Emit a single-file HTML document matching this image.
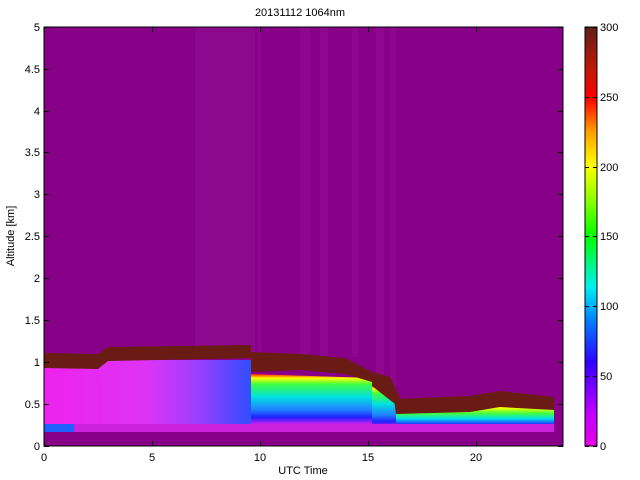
<!DOCTYPE html>
<html><head><meta charset="utf-8"><style>
html,body{margin:0;padding:0;background:#fff;width:640px;height:480px;overflow:hidden}
svg{display:block;font-family:"Liberation Sans",sans-serif;font-size:11px}
</style></head><body>
<svg width="640" height="480" viewBox="0 0 640 480">
<defs>
<linearGradient id="cb" x1="0" y1="1" x2="0" y2="0">
<stop offset="0" stop-color="#e600e6"/><stop offset="0.08" stop-color="#c000ff"/>
<stop offset="0.2" stop-color="#3000ff"/><stop offset="0.3" stop-color="#0080ff"/>
<stop offset="0.38" stop-color="#00f0f0"/><stop offset="0.5" stop-color="#00ff00"/>
<stop offset="0.6" stop-color="#a0ff00"/><stop offset="0.67" stop-color="#ffff00"/>
<stop offset="0.75" stop-color="#ffa000"/><stop offset="0.83" stop-color="#ff0000"/>
<stop offset="0.9" stop-color="#c01808"/><stop offset="1" stop-color="#602018"/>
</linearGradient>
<linearGradient id="gA" x1="0" y1="0" x2="1" y2="0">
<stop offset="0" stop-color="#ee22ee"/><stop offset="0.5" stop-color="#dd33f5"/>
<stop offset="0.75" stop-color="#9940ff"/><stop offset="0.92" stop-color="#5048ff"/>
<stop offset="1" stop-color="#3050ff"/>
</linearGradient>
<linearGradient id="gB" x1="0" y1="0" x2="0" y2="1">
<stop offset="0" stop-color="#ff2000"/><stop offset="0.08" stop-color="#ffff00"/>
<stop offset="0.2" stop-color="#40ff40"/><stop offset="0.45" stop-color="#00e0e0"/>
<stop offset="0.7" stop-color="#2080ff"/><stop offset="0.85" stop-color="#2020ff"/>
<stop offset="1" stop-color="#e020f0"/>
</linearGradient>
<linearGradient id="gD" x1="0" y1="0" x2="0" y2="1">
<stop offset="0" stop-color="#ff1000"/><stop offset="0.3" stop-color="#ffff00"/>
<stop offset="0.5" stop-color="#40ff40"/><stop offset="0.68" stop-color="#00e0f0"/>
<stop offset="0.85" stop-color="#2040ff"/><stop offset="1" stop-color="#e020f0"/>
</linearGradient>
</defs>
<rect x="44" y="27" width="519" height="419" fill="#880088"/>
<g fill="#a020a0" opacity="0.25">
<rect x="195" y="27" width="60" height="330"/><rect x="300" y="27" width="10" height="330"/>
<rect x="320" y="27" width="8" height="330"/><rect x="352" y="27" width="6" height="330"/>
<rect x="376" y="27" width="8" height="350"/><rect x="390" y="27" width="6" height="360"/>
<rect x="258" y="27" width="3" height="330"/>
</g>
<polygon points="44,366 98,366 108,360 251,360 251,430 44,430" fill="url(#gA)"/>
<rect x="44" y="424" width="207" height="10" fill="#cc22dd"/>
<rect x="44" y="424" width="30" height="8" fill="#2060ff"/>
<polygon points="44,353 98,354 108,347 251,345 251,358 108,361 98,369 44,368" fill="#6a1c14"/>
<polygon points="251,374 372,378 372,425 251,425" fill="url(#gB)"/>
<polygon points="251,352 300,354 345,358 372,372 372,382 345,374 300,370 251,372" fill="#6a1c14"/>
<polygon points="372,385 394,392 400,400 400,428 372,428" fill="url(#gB)"/>
<polygon points="372,372 390,377 400,398 395,404 372,386" fill="#6a1c14"/>
<polygon points="396,409 470,404 500,399 554,404 554,428 396,428" fill="url(#gD)"/>
<polygon points="394,399 470,396 500,391 554,397 554,410 500,407 470,412 396,414" fill="#6a1c14"/>
<rect x="251" y="424" width="303" height="8" fill="#cc22dd"/>
<rect x="44" y="432" width="510" height="14" fill="#880088"/>
<rect x="44" y="27" width="519" height="419" fill="none" stroke="#000" stroke-width="1"/>
<g stroke="#000" stroke-width="1">
<path d="M44.5,446v-5M152.5,446v-5M260.5,446v-5M368.5,446v-5M476.5,446v-5M44.5,27v5M152.5,27v5M260.5,27v5M368.5,27v5M476.5,27v5"/>
<path d="M44,446.5h5M44,404.5h5M44,362.5h5M44,320.5h5M44,278.5h5M44,236.5h5M44,194.5h5M44,152.5h5M44,111.5h5M44,69.5h5M44,27.5h5"/>
<path d="M563,446.5h-5M563,404.5h-5M563,362.5h-5M563,320.5h-5M563,278.5h-5M563,236.5h-5M563,194.5h-5M563,152.5h-5M563,111.5h-5M563,69.5h-5M563,27.5h-5"/>
</g>
<g text-anchor="middle" fill="#000">
<text x="44" y="461">0</text><text x="152" y="461">5</text><text x="260" y="461">10</text><text x="368" y="461">15</text><text x="476" y="461">20</text>
<text x="303" y="474">UTC Time</text>
<text x="300" y="16">20131112 1064nm</text>
</g>
<g text-anchor="end" fill="#000">
<text x="40" y="450">0</text><text x="40" y="408">0.5</text><text x="40" y="366">1</text><text x="40" y="324">1.5</text><text x="40" y="282">2</text><text x="40" y="240">2.5</text><text x="40" y="198">3</text><text x="40" y="156">3.5</text><text x="40" y="115">4</text><text x="40" y="73">4.5</text><text x="40" y="31">5</text>
</g>
<text transform="translate(14,236) rotate(-90)" text-anchor="middle">Altitude [km]</text>
<rect x="585" y="27" width="12" height="419" fill="url(#cb)" stroke="#000"/>
<g stroke="#000"><path d="M597,446.5h-4M597,376.5h-4M597,306.5h-4M597,236.5h-4M597,167.5h-4M597,97.5h-4M597,27.5h-4M585,446.5h4M585,376.5h4M585,306.5h4M585,236.5h4M585,167.5h4M585,97.5h4M585,27.5h4"/></g>
<g fill="#000">
<text x="600" y="450">0</text><text x="600" y="380">50</text><text x="600" y="310">100</text><text x="600" y="240">150</text><text x="600" y="171">200</text><text x="600" y="101">250</text><text x="600" y="31">300</text>
</g>
</svg>
</body></html>
